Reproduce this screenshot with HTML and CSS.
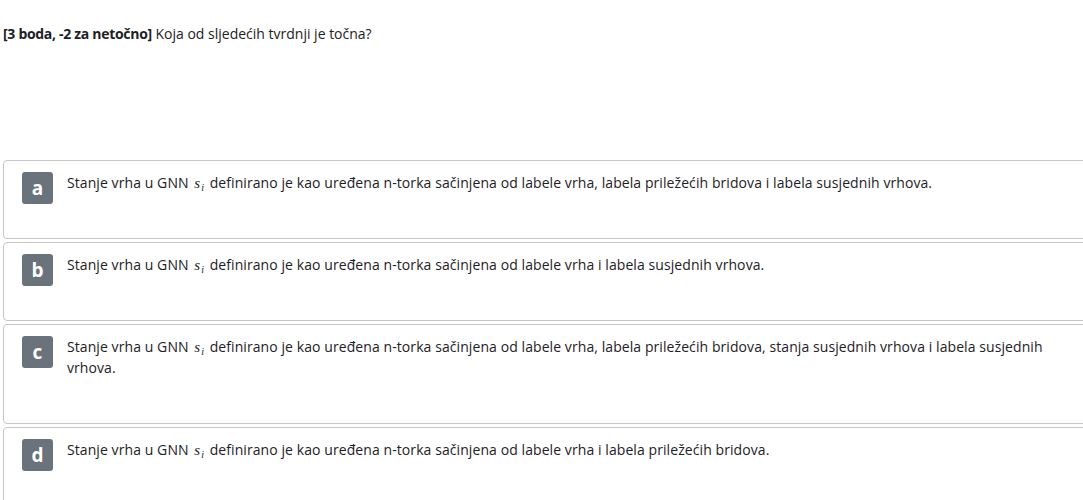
FILE: index.html
```html
<!DOCTYPE html>
<html lang="hr">
<head>
<meta charset="utf-8">
<title>Pitanje</title>
<link rel="stylesheet" href="styles.css">
</head>
<body>
<div class="page">
  <div class="qtext"><strong>[3 boda, -2 za netočno]</strong> Koja od sljedećih tvrdnji je točna?</div>
  <div class="answers">
    <div class="answer">
      <span class="badge">a</span>
      <div class="atext">Stanje vrha u GNN <span class="math">s<sub>i</sub></span> definirano je kao uređena n-torka sačinjena od labele vrha, labela priležećih bridova i labela susjednih vrhova.</div>
    </div>
    <div class="answer">
      <span class="badge">b</span>
      <div class="atext">Stanje vrha u GNN <span class="math">s<sub>i</sub></span> definirano je kao uređena n-torka sačinjena od labele vrha i labela susjednih vrhova.</div>
    </div>
    <div class="answer">
      <span class="badge">c</span>
      <div class="atext">Stanje vrha u GNN <span class="math">s<sub>i</sub></span> definirano je kao uređena n-torka sačinjena od labele vrha, labela priležećih bridova, stanja susjednih vrhova i labela susjednih vrhova.</div>
    </div>
    <div class="answer">
      <span class="badge">d</span>
      <div class="atext">Stanje vrha u GNN <span class="math">s<sub>i</sub></span> definirano je kao uređena n-torka sačinjena od labele vrha i labela priležećih bridova.</div>
    </div>
  </div>
</div>
</body>
</html>
```
FILE: styles.css
```css
html, body {
  margin: 0;
  padding: 0;
  overflow: hidden;
  background: #fff;
}
body {
  font-family: "Open Sans", "Noto Sans", sans-serif;
  font-size: 14px;
  line-height: 21px;
  color: #1d2125;
}
.page {
  padding: 23px 0 0 3px;
}
.qtext {
  margin: 0;
}
.qtext strong {
  font-weight: 700;
  letter-spacing: -0.3px;
}
.answers {
  margin-top: 116px;
  display: flex;
  flex-direction: column;
  gap: 3px;
  width: 1100px;
}
.answer {
  display: flex;
  align-items: flex-start;
  gap: 14px;
  border: 1px solid #c6c6c6;
  border-radius: 4px;
  padding: 11px 18px 12px 18px;
}
.badge {
  flex: none;
  width: 31px;
  height: 32px;
  border-radius: 3px;
  background: #6a737b;
  color: #fff;
  font-weight: 700;
  font-size: 19px;
  line-height: 32px;
  text-align: center;
}
.atext {
  flex: 1;
  max-width: 1005px;
  padding-top: 0;
  padding-bottom: 33px;
  letter-spacing: 0.08px;
}
.math {
  font-family: "Liberation Serif", "DejaVu Serif", serif;
  font-style: italic;
  font-size: 15px;
  line-height: 0;
  margin: 0 2px;
  letter-spacing: 0;
}
.math sub {
  font-size: 10px;
  vertical-align: -3px;
  line-height: 0;
  margin-left: 1px;
}
```
